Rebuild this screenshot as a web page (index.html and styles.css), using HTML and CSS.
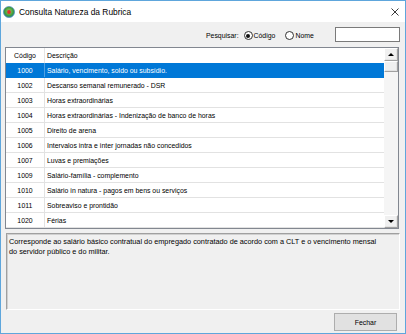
FILE: index.html
```html
<!DOCTYPE html>
<html>
<head>
<meta charset="utf-8">
<link rel="stylesheet" href="styles.css">
</head>
<body>
<div class="window">
  <div class="titlebar">
    <svg class="app-icon" viewBox="0 0 12 12" width="12" height="12">
      <defs>
        <radialGradient id="g" cx="50%" cy="45%" r="55%">
          <stop offset="0%" stop-color="#9ad46a"/>
          <stop offset="70%" stop-color="#3f9a3a"/>
          <stop offset="100%" stop-color="#2f7fa8"/>
        </radialGradient>
      </defs>
      <circle cx="6" cy="6" r="5.6" fill="url(#g)"/>
      <circle cx="6" cy="6" r="5.6" fill="none" stroke="#4a8fb8" stroke-width="0.6"/>
      <circle cx="6" cy="6" r="1.9" fill="#e0302c"/>
    </svg>
    <span class="title">Consulta Natureza da Rubrica</span>
    <svg class="close" viewBox="0 0 8 8" width="8" height="8">
      <path d="M0.5 0.5 L7.5 7.5 M7.5 0.5 L0.5 7.5" stroke="#222" stroke-width="0.9" fill="none"/>
    </svg>
  </div>
  <div class="content">
    <div class="search">
      <span class="lbl">Pesquisar:</span>
      <span class="radio"><span class="dot checked"></span><span>Código</span></span>
      <span class="radio second"><span class="dot"></span><span>Nome</span></span>
      <span class="textbox"></span>
    </div>
    <div class="list">
      <div class="rows">
        <div class="row head"><span class="c1">Código</span><span class="c2">Descrição</span></div>
        <div class="row sel"><span class="c1">1000</span><span class="c2">Salário, vencimento, soldo ou subsídio.</span></div>
        <div class="row"><span class="c1">1002</span><span class="c2">Descanso semanal remunerado - DSR</span></div>
        <div class="row"><span class="c1">1003</span><span class="c2">Horas extraordinárias</span></div>
        <div class="row"><span class="c1">1004</span><span class="c2">Horas extraordinárias - Indenização de banco de horas</span></div>
        <div class="row"><span class="c1">1005</span><span class="c2">Direito de arena</span></div>
        <div class="row"><span class="c1">1006</span><span class="c2">Intervalos intra e inter jornadas não concedidos</span></div>
        <div class="row"><span class="c1">1007</span><span class="c2">Luvas e premiações</span></div>
        <div class="row"><span class="c1">1009</span><span class="c2">Salário-família - complemento</span></div>
        <div class="row"><span class="c1">1010</span><span class="c2">Salário in natura - pagos em bens ou serviços</span></div>
        <div class="row"><span class="c1">1011</span><span class="c2">Sobreaviso e prontidão</span></div>
        <div class="row"><span class="c1">1020</span><span class="c2">Férias</span></div>
      </div>
      <div class="scrollbar">
        <div class="sb-btn"><span class="arrow-up"></span></div>
        <div class="thumb"></div>
        <div class="track"></div>
        <div class="sb-btn"><span class="arrow-down"></span></div>
      </div>
    </div>
    <div class="desc">Corresponde ao salário básico contratual do empregado contratado de acordo com a CLT e o vencimento mensal do servidor público e do militar.</div>
    <div class="footer"><button class="btn">Fechar</button></div>
  </div>
</div>
</body>
</html>
```

FILE: styles.css
```css
html, body {
  margin: 0;
  padding: 0;
  background: #f0f0f0;
}
.window {
  width: 406px;
  height: 334px;
  box-sizing: border-box;
  border: 1px solid #5ea6dc;
  display: flex;
  flex-direction: column;
  font-family: "Liberation Sans", Arial, sans-serif;
  font-size: 6.9px;
  color: #000;
  background: #f0f0f0;
  overflow: hidden;
}
.titlebar {
  height: 21px;
  background: #fff;
  display: flex;
  align-items: center;
  flex: none;
}
.app-icon {
  margin-left: 2px;
  flex: none;
}
.title {
  margin-left: 4px;
  font-size: 8.4px;
  flex: 1;
}
.close {
  margin-right: 6px;
  flex: none;
}
.content {
  flex: 1;
  display: flex;
  flex-direction: column;
}
.search {
  height: 25px;
  display: flex;
  align-items: center;
  padding-left: 205px;
  padding-right: 5px;
  flex: none;
}
.lbl {
  margin-top: 2px;
}
.radio {
  display: flex;
  align-items: center;
  margin-left: 5px;
  margin-top: 2px;
}
.radio.second {
  margin-left: 10px;
}
.dot {
  width: 9px;
  height: 9px;
  box-sizing: border-box;
  border: 1px solid #333;
  border-radius: 50%;
  background: #fff;
  margin-right: 1px;
  position: relative;
}
.dot.checked::after {
  content: "";
  position: absolute;
  left: 1.5px;
  top: 1.5px;
  width: 4px;
  height: 4px;
  border-radius: 50%;
  background: #111;
}
.textbox {
  margin-left: auto;
  width: 65px;
  height: 15px;
  box-sizing: border-box;
  border: 1px solid #7a7a7a;
  background: #fff;
}
.list {
  margin-left: 4px;
  width: 394px;
  height: 182px;
  box-sizing: border-box;
  border: 1px solid #828790;
  background: #fff;
  display: flex;
  flex: none;
}
.rows {
  width: 378px;
  display: flex;
  flex-direction: column;
}
.row {
  height: 15px;
  box-sizing: border-box;
  border-bottom: 1px solid #e2e2e2;
  display: flex;
  align-items: center;
}
.row.head {
  border-bottom: none;
}
.row.sel {
  background: #0078d7;
  color: #fff;
  border-bottom-color: #0078d7;
}
.c1 {
  width: 39px;
  height: 100%;
  box-sizing: border-box;
  border-right: 1px solid #e2e2e2;
  display: flex;
  align-items: center;
  justify-content: center;
  flex: none;
}
.row.head .c1 {
  border-right-color: #e5e5e5;
}
.row.sel .c1 {
  border-right-color: #4ea0e2;
}
.c2 {
  padding-left: 2px;
  white-space: nowrap;
}
.scrollbar {
  width: 14px;
  background: #f0f0f0;
  display: flex;
  flex-direction: column;
  flex: none;
}
.sb-btn, .thumb {
  height: 13px;
  box-sizing: border-box;
  border: 1px solid;
  border-color: #fff #a0a0a0 #a0a0a0 #fff;
  box-shadow: inset -1px -1px 0 #e3e3e3;
  background: #f0f0f0;
  display: flex;
  align-items: center;
  justify-content: center;
  flex: none;
}
.thumb {
  height: 11px;
}
.track {
  flex: 1;
  background: #f5f5f5;
}
.arrow-up {
  width: 0;
  height: 0;
  border-left: 3px solid transparent;
  border-right: 3px solid transparent;
  border-bottom: 3px solid #000;
}
.arrow-down {
  width: 0;
  height: 0;
  border-left: 3px solid transparent;
  border-right: 3px solid transparent;
  border-top: 3px solid #000;
}
.desc {
  margin-left: 5px;
  margin-top: 4px;
  width: 394px;
  height: 77px;
  box-sizing: border-box;
  border: 1px solid;
  border-color: #a0a0a0 #fff #fff #a0a0a0;
  box-shadow: inset 1px 1px 0 #d0d0d0;
  padding: 3px 17px 3px 2px;
  font-size: 7.3px;
  line-height: 10px;
  flex: none;
}
.footer {
  display: flex;
  justify-content: flex-end;
  padding-right: 8px;
  margin-top: 3px;
}
.btn {
  width: 63px;
  height: 18px;
  box-sizing: border-box;
  border: 1px solid #adadad;
  background: #e1e1e1;
  font-family: "Liberation Sans", Arial, sans-serif;
  font-size: 6.9px;
  color: #000;
  padding: 0;
}
```
